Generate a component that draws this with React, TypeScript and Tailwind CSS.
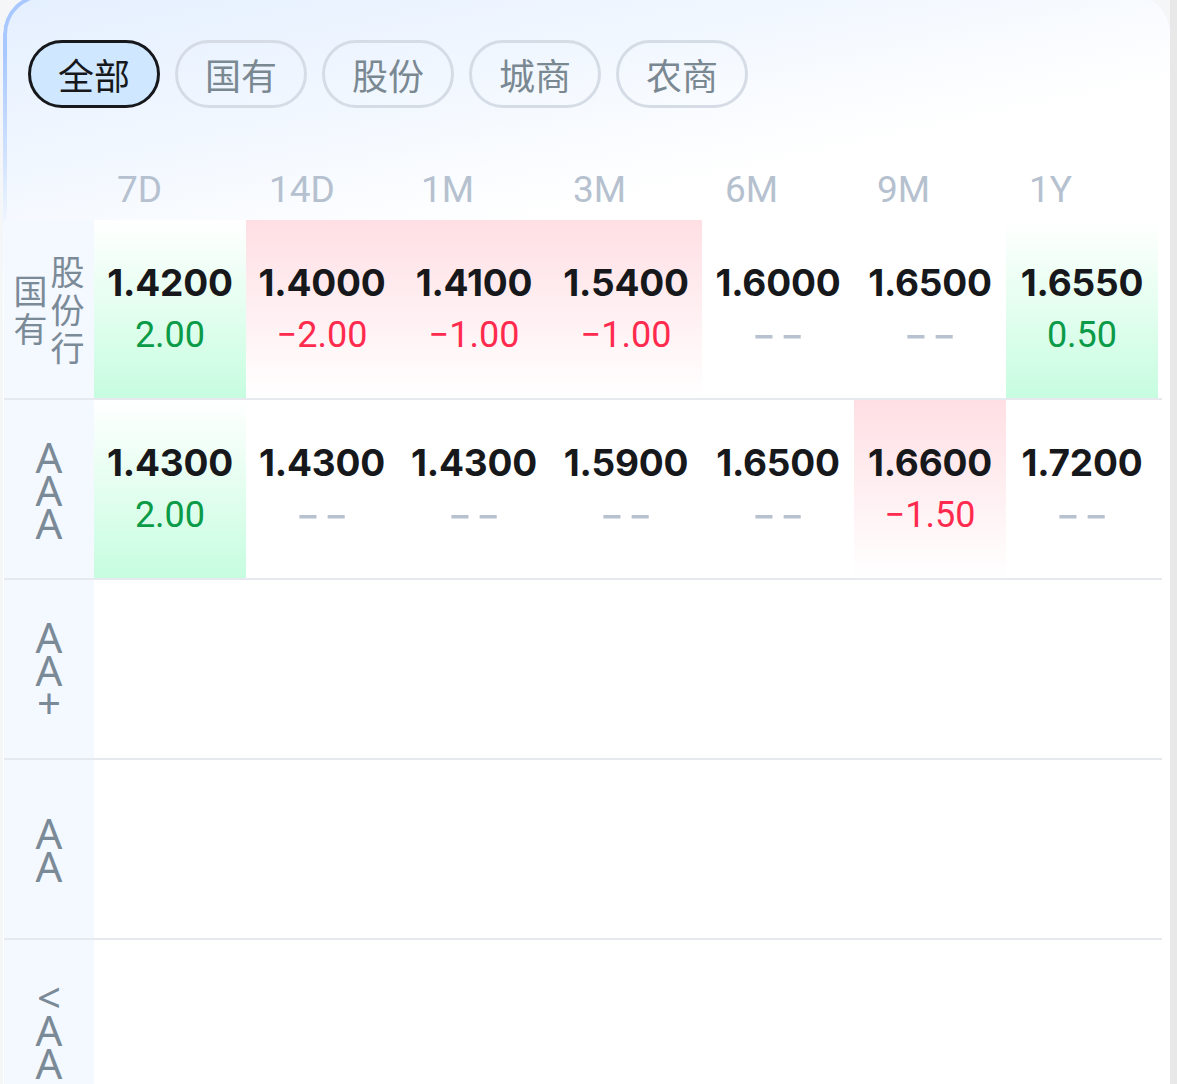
import React from 'react';

type Trend = 'up' | 'down' | 'none';
type Cell = { v: string; d: string; t: Trend };

const COLS = ['7D', '14D', '1M', '3M', '6M', '9M', '1Y'];
const PILLS = ['全部', '国有', '股份', '城商', '农商'];

const ROWS: { label: string; cells: Cell[] }[] = [
  {
    label: '',
    cells: [
      { v: '1.4200', d: '2.00', t: 'up' },
      { v: '1.4000', d: '−2.00', t: 'down' },
      { v: '1.4100', d: '−1.00', t: 'down' },
      { v: '1.5400', d: '−1.00', t: 'down' },
      { v: '1.6000', d: '--', t: 'none' },
      { v: '1.6500', d: '--', t: 'none' },
      { v: '1.6550', d: '0.50', t: 'up' },
    ],
  },
  {
    label: 'AAA',
    cells: [
      { v: '1.4300', d: '2.00', t: 'up' },
      { v: '1.4300', d: '--', t: 'none' },
      { v: '1.4300', d: '--', t: 'none' },
      { v: '1.5900', d: '--', t: 'none' },
      { v: '1.6500', d: '--', t: 'none' },
      { v: '1.6600', d: '−1.50', t: 'down' },
      { v: '1.7200', d: '--', t: 'none' },
    ],
  },
  { label: 'AA+', cells: [] },
  { label: 'AA', cells: [] },
  { label: '<AA', cells: [] },
];

const CJK = "font-['Noto_Sans_CJK_SC','Noto_Sans',sans-serif]";

function VText({ text, className, item }: { text: string; className?: string; item: string }) {
  return (
    <div className={`flex flex-col items-center ${className ?? ''}`}>
      {text.split('').map((c, i) => (
        <span key={i} className={`flex items-center justify-center ${item}`}>
          {c}
        </span>
      ))}
    </div>
  );
}

function DataCell({ cell }: { cell?: Cell }) {
  if (!cell) return <div className="w-[152px] shrink-0" />;
  const bg =
    cell.t === 'up'
      ? 'bg-gradient-to-b from-white to-[#c6fde0]'
      : cell.t === 'down'
      ? 'bg-gradient-to-b from-[#ffdfe4] to-white'
      : '';
  const sub = cell.t === 'up' ? 'text-[#0a9a48]' : 'text-[#ff2b4e]';
  return (
    <div className={`w-[152px] shrink-0 flex flex-col items-center justify-center ${bg}`}>
      <div className="font-['Inter',sans-serif] font-bold text-[37px] leading-[44px] text-[#17181b] tracking-[-0.2px]">
        {cell.v}
      </div>
      {cell.t === 'none' ? (
        <div className="mt-[8px] h-[44px] flex items-center justify-center overflow-visible">
          <span className="relative -top-[1px] pl-[3px] font-['Inter',sans-serif] font-light text-[56px] leading-[44px] tracking-[3px] text-[#b7c1cf]">
            --
          </span>
        </div>
      ) : (
        <div className={`mt-[8px] font-['Roboto',sans-serif] text-[36px] leading-[44px] ${sub}`}>{cell.d}</div>
      )}
    </div>
  );
}

export default function App() {
  return (
    <div className="w-[1177px] h-[1084px] overflow-hidden bg-[#f5f6f8] flex">
      <div className="w-[1170px] shrink-0 pl-[3px]">
        <div className="relative -mt-[6px] h-[1100px] rounded-t-[40px] overflow-hidden bg-[linear-gradient(168deg,#e4efff_0%,#f1f7ff_13%,#ffffff_25%)]">
          <div className="pointer-events-none absolute left-0 top-0 w-[160px] h-[260px] rounded-tl-[40px] border-l-4 border-t-4 border-[#a9c8ff] [mask-image:linear-gradient(to_bottom,black_0px,black_60px,transparent_240px),linear-gradient(to_right,black_0px,black_24px,transparent_70px)] [mask-composite:intersect]" />
          {/* pills */}
          <div className="relative flex gap-[15px] pl-[25px] pt-[46px]">
            {PILLS.map((p, i) => (
              <div
                key={p}
                className={
                  i === 0
                    ? `w-[132px] h-[68px] rounded-full flex items-center justify-center border-[3px] border-[#16181c] bg-[#cfe7ff] text-[36px] text-[#17181b] ${CJK}`
                    : `w-[132px] h-[68px] rounded-full flex items-center justify-center border-[3px] border-[#d5dce5] text-[36px] text-[#7a8892] ${CJK}`
                }
              >
                {p}
              </div>
            ))}
          </div>
          {/* header */}
          <div className="relative ml-[1px] mt-[52px] flex h-[60px] items-center">
            <div className="w-[90px] shrink-0" />
            {COLS.map((c) => (
              <div
                key={c}
                className="w-[152px] shrink-0 pl-[23px] font-['Roboto',sans-serif] font-normal text-[37px] leading-[44px] text-[#b6c1cf]"
              >
                {c}
              </div>
            ))}
          </div>
          {/* rows */}
          <div className="relative ml-[1px] w-[1158px]">
            {ROWS.map((r, ri) => (
              <div key={ri} className="flex h-[180px] border-b-2 border-[#e6eaef]">
                <div className="w-[90px] shrink-0 bg-[#f4f8ff] flex items-center justify-center text-[#7b8a97]">
                  {ri === 0 ? (
                    <div className={`flex items-center gap-[3px] text-[34px] ${CJK}`}>
                      <VText text="国有" item="h-[38px] leading-[38px]" />
                      <VText text="股份行" item="h-[38px] leading-[38px]" />
                    </div>
                  ) : (
                    <VText
                      text={r.label}
                      className="font-['Noto_Sans',sans-serif] text-[42px]"
                      item="h-[33px] leading-[33px]"
                    />
                  )}
                </div>
                {COLS.map((_, ci) => (
                  <DataCell key={ci} cell={r.cells[ci]} />
                ))}
              </div>
            ))}
          </div>
        </div>
      </div>
      <div className="w-[7px] shrink-0 bg-[#e8e8e8]" />
    </div>
  );
}
